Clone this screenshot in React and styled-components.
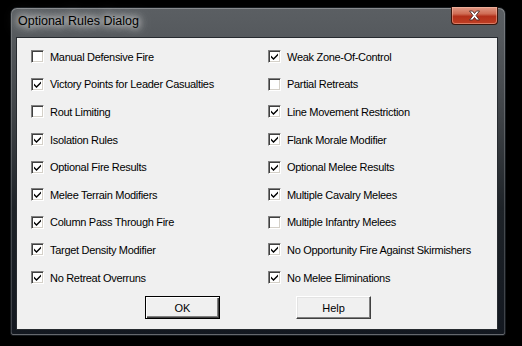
import React from 'react';
import styled, { createGlobalStyle } from 'styled-components';

const rules = [
  ['Manual Defensive Fire', false, 'Weak Zone-Of-Control', true],
  ['Victory Points for Leader Casualties', true, 'Partial Retreats', false],
  ['Rout Limiting', false, 'Line Movement Restriction', true],
  ['Isolation Rules', true, 'Flank Morale Modifier', true],
  ['Optional Fire Results', true, 'Optional Melee Results', true],
  ['Melee Terrain Modifiers', true, 'Multiple Cavalry Melees', true],
  ['Column Pass Through Fire', true, 'Multiple Infantry Melees', false],
  ['Target Density Modifier', true, 'No Opportunity Fire Against Skirmishers', true],
  ['No Retreat Overruns', true, 'No Melee Eliminations', true]
];

const GlobalStyle = createGlobalStyle`
  html, body {
    margin: 0;
    background: #000;
  }
`;

const Page = styled.div`
  width: 522px;
  height: 346px;
  padding: 7px 0 0 10px;
  box-sizing: border-box;
  background: #000;
`;

const Window = styled.div`
  width: 496px;
  height: 329px;
  box-sizing: border-box;
  padding: 0 7px 5px 5px;
  border: 1px solid #15191d;
  border-radius: 7px 7px 3px 3px;
  background: linear-gradient(
    to bottom,
    #5b5f63 0,
    #55595d 30px,
    #3e4246 110px,
    #1e2328 200px,
    #131820 100%
  );
  box-shadow: inset 0 1px 0 rgba(255, 255, 255, 0.28),
    inset 1px 0 0 rgba(255, 255, 255, 0.18), inset -1px 0 0 rgba(255, 255, 255, 0.18),
    inset 0 -1px 0 rgba(255, 255, 255, 0.35);
  display: flex;
  flex-direction: column;
`;

const TitleBar = styled.div`
  height: 29px;
  display: flex;
  align-items: flex-start;
  justify-content: space-between;
`;

const Title = styled.span`
  margin: 6px 0 0 2px;
  font-family: 'Liberation Sans', Arial, sans-serif;
  font-size: 12.5px;
  color: #000;
  text-shadow: 0 0 6px #e8e8e8, 0 0 10px #d8d8d8, 0 0 14px #c8c8c8;
`;

const CloseButton = styled.div`
  width: 47px;
  height: 18px;
  margin: -1px 0 0 0;
  box-sizing: border-box;
  border: 1px solid #3a160c;
  border-top: none;
  border-radius: 0 0 4px 4px;
  background: linear-gradient(to bottom, #e09a86 0, #cf6c54 40%, #b3301a 55%, #c03f24 100%);
  box-shadow: inset 0 0 0 1px rgba(255, 200, 180, 0.45);
  display: flex;
  align-items: center;
  justify-content: center;
`;

const Client = styled.div`
  flex: 1;
  background: #f0f0f0;
  border: 1px solid #262a2f;
  display: flex;
  flex-direction: column;
`;

const RuleGrid = styled.div`
  display: grid;
  grid-template-columns: 237px 1fr;
  grid-auto-rows: 27.6px;
  padding: 5px 0 0 14px;
`;

const Rule = styled.label`
  display: flex;
  align-items: center;
  gap: 6px;
  font-family: 'Liberation Sans', Arial, sans-serif;
  font-size: 11px;
  letter-spacing: -0.3px;
  color: #000;
`;

const Box = styled.span`
  width: 13px;
  height: 13px;
  box-sizing: border-box;
  background: #fff;
  border-style: solid;
  border-width: 1px;
  border-color: #808080 #fff #fff #808080;
  box-shadow: inset 1px 1px 0 #404040, inset -1px -1px 0 #d4d0c8;
  display: flex;
  align-items: center;
  justify-content: center;
  flex-shrink: 0;
`;

const ButtonRow = styled.div`
  display: flex;
  gap: 76px;
  padding: 5px 0 0 128px;
`;

const Button = styled.div`
  width: 75px;
  height: 23px;
  box-sizing: border-box;
  background: #f0f0f0;
  border: 1px solid ${p => (p.$default ? '#000' : '#fff')};
  ${p => !p.$default && 'border-color: #fff #404040 #404040 #fff;'}
  box-shadow: ${p =>
    p.$default
      ? 'inset 1px 1px 0 #fff, inset -1px -1px 0 #404040, inset -2px -2px 0 #808080'
      : 'inset -1px -1px 0 #808080, inset 1px 1px 0 #e3e3e3'};
  display: flex;
  align-items: center;
  justify-content: center;
  font-family: 'Liberation Sans', Arial, sans-serif;
  font-size: 11px;
  color: #000;
`;

const Check = () => (
  <svg width="9" height="9" viewBox="0 0 9 9">
    <path d="M1 3.5 L3.5 6 L8 1.5 L8 3.5 L3.5 8 L1 5.5 Z" fill="#000" />
  </svg>
);

const CloseGlyph = () => (
  <svg width="13" height="11" viewBox="0 0 13 11">
    <path
      d="M1.5 1 L4.5 1 L6.5 3.5 L8.5 1 L11.5 1 L8 5.5 L11.5 10 L8.5 10 L6.5 7.5 L4.5 10 L1.5 10 L5 5.5 Z"
      fill="#fff"
      stroke="#4a2a26"
      strokeWidth="0.9"
      strokeLinejoin="round"
    />
  </svg>
);

const RuleItem = ({ text, checked }) => (
  <Rule>
    <Box>{checked && <Check />}</Box>
    {text}
  </Rule>
);

export default function App() {
  return (
    <Page>
      <GlobalStyle />
      <Window>
        <TitleBar>
          <Title>Optional Rules Dialog</Title>
          <CloseButton>
            <CloseGlyph />
          </CloseButton>
        </TitleBar>
        <Client>
          <RuleGrid>
            {rules.map(([left, lc, right, rc]) => (
              <React.Fragment key={left}>
                <RuleItem text={left} checked={lc} />
                <RuleItem text={right} checked={rc} />
              </React.Fragment>
            ))}
          </RuleGrid>
          <ButtonRow>
            <Button $default>OK</Button>
            <Button>Help</Button>
          </ButtonRow>
        </Client>
      </Window>
    </Page>
  );
}
